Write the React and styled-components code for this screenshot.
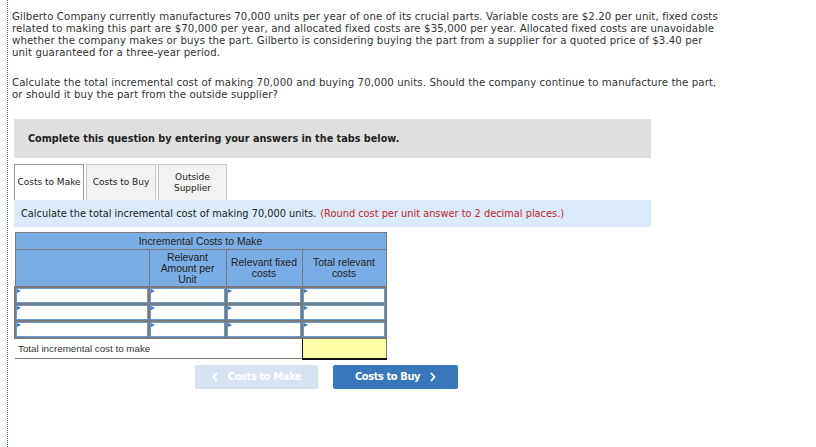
import React from "react";
import styled, { createGlobalStyle } from "styled-components";

const Global = createGlobalStyle`
  html, body { margin: 0; padding: 0; background: #fff; }
  body { width: 816px; height: 447px; overflow: hidden; }
`;

const Page = styled.div`
  margin-left: 7px;
  border-left: 1px dotted #2f6db5;
  padding: 11px 0 60px 4px;
  min-height: 447px;
  box-sizing: border-box;
`;

const Para = styled.div`
  margin: 0 0 18px 0;
  width: 780px;
  font-family: "DejaVu Sans", "Liberation Sans", sans-serif;
  font-size: 10.2px;
  letter-spacing: 0.1px;
  color: #333;
  white-space: nowrap;
`;

const Line = styled.div`
  height: 12px;
  line-height: 12px;
`;

const Section = styled.div`
  margin-left: 2px;
  width: 637px;
`;

const Banner = styled.div`
  height: 39px;
  background: #dfdfdf;
  display: flex;
  align-items: center;
  padding-left: 14px;
  font-family: Verdana, "DejaVu Sans", sans-serif;
  font-weight: bold;
  font-size: 9.7px;
  color: #222;
`;

const Tabs = styled.div`
  display: flex;
  gap: 2px;
  margin-top: 6px;
  height: 36px;
`;

const Tab = styled.div`
  box-sizing: border-box;
  width: ${(p) => p.$w}px;
  height: 36px;
  display: flex;
  align-items: center;
  justify-content: center;
  text-align: center;
  font-family: Verdana, "DejaVu Sans", sans-serif;
  font-size: 9px;
  line-height: 11px;
  color: #222;
  background: ${(p) => (p.$active ? "#fff" : "#f2f2f2")};
  border: 1px solid ${(p) => (p.$active ? "#999" : "#c8c8c8")};
  border-bottom: none;
`;

const Instruction = styled.div`
  height: 27px;
  background: #daeaf8;
  display: flex;
  align-items: center;
  padding-left: 7px;
  font-family: Verdana, "DejaVu Sans", sans-serif;
  font-size: 9.8px;
  color: #222;
  white-space: nowrap;
`;

const Red = styled.span`
  color: #c0282d;
  margin-left: 4px;
`;

const Table = styled.table`
  margin-top: 5px;
  border-collapse: collapse;
  table-layout: fixed;
  width: 371px;
  font-family: Arial, "Liberation Sans", sans-serif;
  font-size: 10.4px;
  color: #222;
`;

const Th = styled.th`
  background: #7aade3;
  border: 1px solid #7a7a7a;
  font-weight: normal;
  padding: 0;
  height: ${(p) => p.$h}px;
  line-height: 11px;
  text-align: center;
`;

const Td = styled.td`
  border: 2px solid #7a7a7a;
  padding: 0;
  height: 14px;
  background: #fff;
`;

const InputBox = styled.div`
  box-sizing: border-box;
  height: 15px;
  border: 1px solid #6a9bd6;
  background: #fff;
  position: relative;
  &::before {
    content: "";
    position: absolute;
    left: 0;
    top: 0;
    border-left: 4px solid #3b78c4;
    border-top: 2px solid transparent;
    border-bottom: 2px solid transparent;
  }
`;

const TotalLabel = styled.td`
  padding: 0 0 0 3px;
  height: 19px;
  border-bottom: 1px solid #7a7a7a;
  font-size: 9.8px;
  color: #333;
`;

const Yellow = styled.td`
  background: #ffffa8;
  border-top: 2px solid #111;
  border-left: 1px solid #111;
  border-bottom: 2px solid #111;
  border-right: 1px solid #7a7a7a;
  height: 17px;
  padding: 0;
`;

const Nav = styled.div`
  display: flex;
  gap: 15px;
  margin-top: 5px;
  padding-left: 181px;
`;

const NavButton = styled.button`
  box-sizing: border-box;
  width: ${(p) => p.$w}px;
  height: 24px;
  border: none;
  border-radius: 2px;
  background: ${(p) => (p.$disabled ? "#d6e2f0" : "#3a76bb")};
  color: #fff;
  font-family: "Liberation Sans Narrow", "DejaVu Sans Condensed", "Liberation Sans", sans-serif;
  font-stretch: condensed;
  font-weight: bold;
  font-size: 11px;
  letter-spacing: -0.4px;
  display: flex;
  align-items: center;
  justify-content: center;
  gap: 10px;
  padding: 0;
`;

const Chevron = ({ dir }) => (
  <svg width="6" height="10" viewBox="0 0 6 10">
    <path
      d={dir === "left" ? "M5 1 L1.5 5 L5 9" : "M1 1 L4.5 5 L1 9"}
      fill="none"
      stroke="#fff"
      strokeWidth="1.8"
    />
  </svg>
);

const rows = [0, 1, 2];

export default function App() {
  return (
    <>
      <Global />
      <Page>
        <Para>
          <Line>Gilberto Company currently manufactures 70,000 units per year of one of its crucial parts. Variable costs are $2.20 per unit, fixed costs</Line>
          <Line>related to making this part are $70,000 per year, and allocated fixed costs are $35,000 per year. Allocated fixed costs are unavoidable</Line>
          <Line>whether the company makes or buys the part. Gilberto is considering buying the part from a supplier for a quoted price of $3.40 per</Line>
          <Line>unit guaranteed for a three-year period.</Line>
        </Para>
        <Para>
          <Line>Calculate the total incremental cost of making 70,000 and buying 70,000 units. Should the company continue to manufacture the part,</Line>
          <Line>or should it buy the part from the outside supplier?</Line>
        </Para>
        <Section>
          <Banner>Complete this question by entering your answers in the tabs below.</Banner>
          <Tabs>
            <Tab $w={70} $active>Costs to Make</Tab>
            <Tab $w={70}>Costs to Buy</Tab>
            <Tab $w={69}>Outside<br />Supplier</Tab>
          </Tabs>
          <Instruction>
            Calculate the total incremental cost of making 70,000 units.
            <Red>(Round cost per unit answer to 2 decimal places.)</Red>
          </Instruction>
          <Table>
            <colgroup>
              <col style={{ width: 134 }} />
              <col style={{ width: 77 }} />
              <col style={{ width: 76 }} />
              <col style={{ width: 84 }} />
            </colgroup>
            <thead>
              <tr>
                <Th colSpan={4} $h={16}>Incremental Costs to Make</Th>
              </tr>
              <tr>
                <Th $h={36}></Th>
                <Th $h={36}>Relevant<br />Amount per<br />Unit</Th>
                <Th $h={36}>Relevant fixed<br />costs</Th>
                <Th $h={36}>Total relevant<br />costs</Th>
              </tr>
            </thead>
            <tbody>
              {rows.map((r) => (
                <tr key={r}>
                  {[0, 1, 2, 3].map((c) => (
                    <Td key={c}>
                      <InputBox />
                    </Td>
                  ))}
                </tr>
              ))}
              <tr>
                <TotalLabel colSpan={3}>Total incremental cost to make</TotalLabel>
                <Yellow />
              </tr>
            </tbody>
          </Table>
          <Nav>
            <NavButton $w={123} $disabled>
              <Chevron dir="left" />
              Costs to Make
            </NavButton>
            <NavButton $w={125}>
              Costs to Buy
              <Chevron dir="right" />
            </NavButton>
          </Nav>
        </Section>
      </Page>
    </>
  );
}
